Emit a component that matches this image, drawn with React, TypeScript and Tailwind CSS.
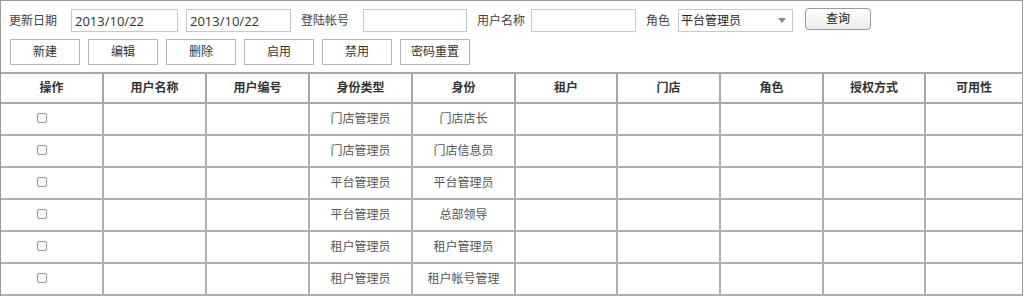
const cols = ['操作', '用户名称', '用户编号', '身份类型', '身份', '租户', '门店', '角色', '授权方式', '可用性'];

// column widths measured from the design
const colW = ['w-[102px]', 'w-[103px]', 'w-[103px]', 'w-[103px]', 'w-[103px]', 'w-[102px]', 'w-[103px]', 'w-[103px]', 'w-[102px]', ''];

const rows = [
  ['门店管理员', '门店店长'],
  ['门店管理员', '门店信息员'],
  ['平台管理员', '平台管理员'],
  ['平台管理员', '总部领导'],
  ['租户管理员', '租户管理员'],
  ['租户管理员', '租户帐号管理'],
];

const buttons = ['新建', '编辑', '删除', '启用', '禁用', '密码重置'];

const App = () => {
  return (
    <div className="w-[1024px] h-[296px] overflow-hidden bg-white font-['Liberation_Sans','Noto_Sans_CJK_SC',sans-serif] text-[12px] text-[#444]">
      <div className="w-[1023px] h-[296px] border-l border-t border-r border-[#9a9a9a] flex flex-col">
        {/* search row */}
        <div className="flex items-center h-[23px] mt-[8px] pl-[8px]">
          <span className="w-[62px]">更新日期</span>
          <input
            readOnly
            value="2013/10/22"
            className="w-[107px] h-[23px] border border-[#c8c8c8] px-[3px] text-[13px] text-[#333] font-['Open_Sans',sans-serif] outline-none"
          />
          <input
            readOnly
            value="2013/10/22"
            className="ml-[8px] w-[105px] h-[23px] border border-[#c8c8c8] px-[3px] text-[13px] text-[#333] font-['Open_Sans',sans-serif] outline-none"
          />
          <span className="ml-[10px] w-[62px]">登陆帐号</span>
          <input readOnly className="w-[104px] h-[23px] border border-[#c8c8c8] outline-none" />
          <span className="ml-[10px] w-[54px]">用户名称</span>
          <input readOnly className="w-[105px] h-[23px] border border-[#c8c8c8] outline-none" />
          <span className="ml-[10px] w-[32px]">角色</span>
          <div className="w-[115px] h-[23px] border border-[#c8c8c8] flex items-center justify-between pl-[2px] pr-[6px] text-[#222]">
            <span>平台管理员</span>
            <svg width="8" height="5" viewBox="0 0 8 5">
              <path d="M0 0 L8 0 L4 5 Z" fill="#8a8a8a" />
            </svg>
          </div>
          <button className="ml-[12px] -mt-[3px] w-[66px] h-[22px] border border-[#9a9a9a] rounded-[4px] bg-gradient-to-b from-white to-[#ececec] text-[#222]">
            查询
          </button>
        </div>

        {/* action buttons */}
        <div className="flex items-center gap-[8px] pl-[9px] mt-[7px] h-[26px]">
          {buttons.map((b) => (
            <button key={b} className="w-[70px] h-[26px] border border-[#b5b5b5] bg-white text-[#333]">
              {b}
            </button>
          ))}
        </div>

        {/* table */}
        <table className="mt-[7px] w-full table-fixed border-collapse">
          <colgroup>
            {cols.map((c, i) => (
              <col key={c} className={colW[i]} />
            ))}
          </colgroup>
          <thead>
            <tr className="h-[30px]">
              {cols.map((c, i) => (
                <th
                  key={c}
                  className={`border-t-2 border-b-2 border-[#a8a8a8] font-bold text-[#333] ${i > 0 ? 'border-l-2' : ''}`}
                >
                  {c}
                </th>
              ))}
            </tr>
          </thead>
          <tbody>
            {rows.map((r, ri) => (
              <tr key={ri} className="h-[32px]">
                {cols.map((c, i) => (
                  <td
                    key={c}
                    className={`border-b-2 border-[#b0b0b0] text-[#555] ${i > 0 ? 'border-l-2 text-center' : 'text-left pl-[36px]'}`}
                  >
                    {i === 0 ? (
                      <span className="inline-block w-[10px] h-[10px] border border-[#999] rounded-[2px] bg-[#f6f6f6] align-middle -mt-[4px]" />
                    ) : i === 3 ? (
                      r[0]
                    ) : i === 4 ? (
                      r[1]
                    ) : null}
                  </td>
                ))}
              </tr>
            ))}
          </tbody>
        </table>
      </div>
    </div>
  );
};

export default App;
